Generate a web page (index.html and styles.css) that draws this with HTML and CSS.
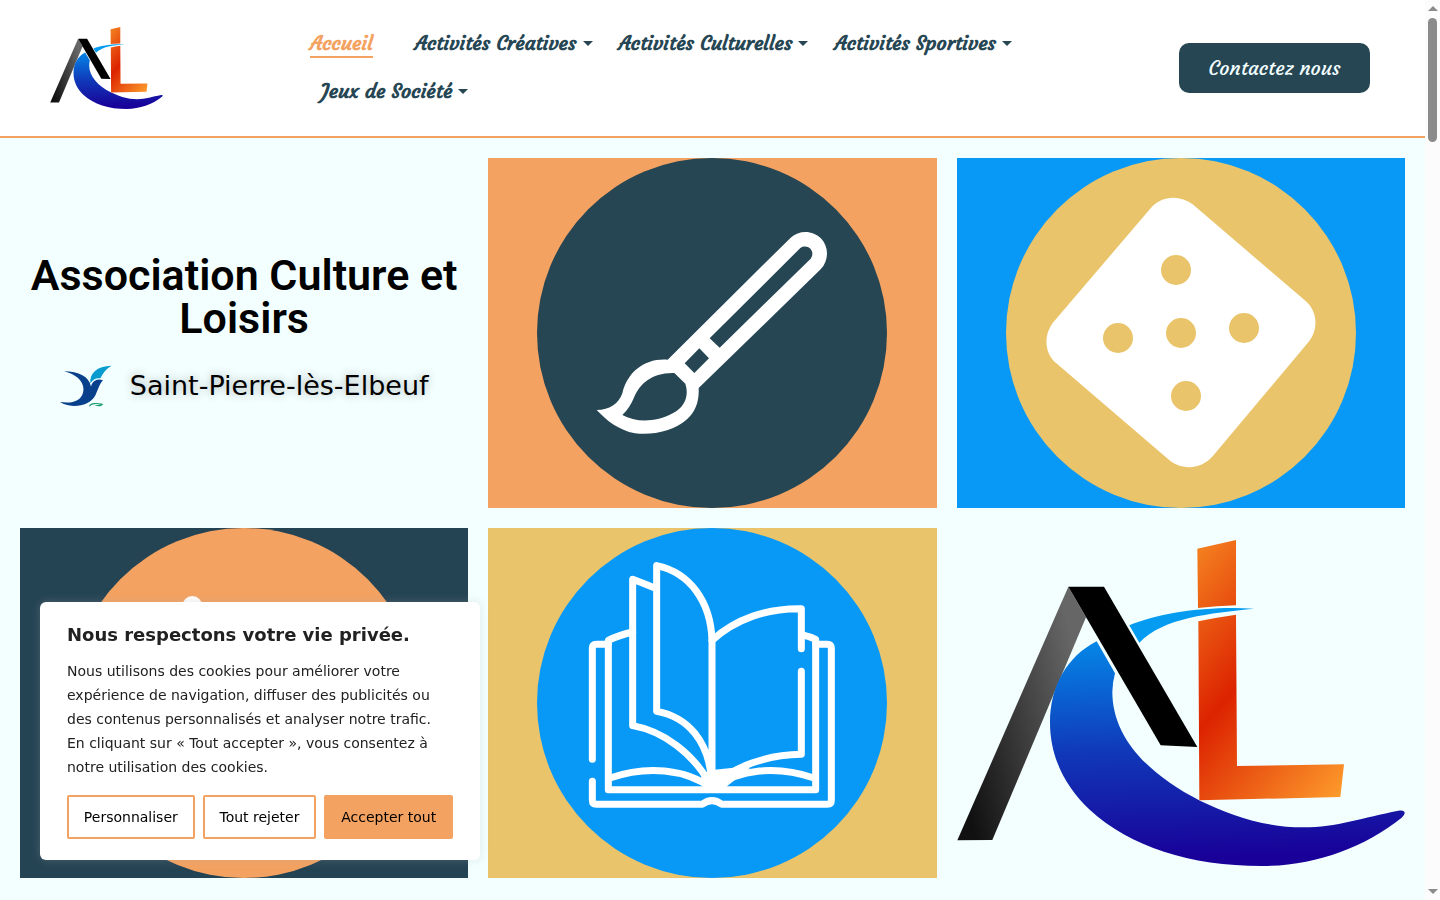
FILE: index.html
```html
<!DOCTYPE html>
<html lang="fr">
<head>
  <meta charset="UTF-8">
  <meta name="viewport" content="width=device-width, initial-scale=1">
  <title>Association Culture et Loisirs</title>
  <link rel="stylesheet" href="styles.css">
</head>
<body>
  <!-- shared logo -->
  <svg class="sprite" aria-hidden="true">
    <defs>
      <linearGradient id="gradLeg" gradientUnits="userSpaceOnUse" x1="60" y1="850" x2="460" y2="760">
        <stop offset="0" stop-color="#111"/>
        <stop offset="1" stop-color="#666"/>
      </linearGradient>
      <linearGradient id="gradC" gradientUnits="userSpaceOnUse" x1="640" y1="334" x2="660" y2="990">
        <stop offset="0" stop-color="#0585e6"/>
        <stop offset="0.5" stop-color="#1038b8"/>
        <stop offset="1" stop-color="#190098"/>
      </linearGradient>
      <linearGradient id="gradL" gradientUnits="userSpaceOnUse" x1="530" y1="289" x2="1150" y2="823">
        <stop offset="0" stop-color="#f58220"/>
        <stop offset="0.45" stop-color="#dc2300"/>
        <stop offset="1" stop-color="#fd9a2b"/>
      </linearGradient>
    </defs>
    <symbol id="logo" viewBox="21 30 1345 978">
      <path fill="url(#gradLeg)" d="M355 170 408 262 127 930 22 931Z"/>
      <path fill="url(#gradC)" d="M440 334C350 380 300 470 300 578C300 680 345 770 420 840C540 950 720 1008 935 1008C1090 1008 1240 955 1355 863C1370 849 1366 838 1345 842C1240 862 1160 892 1060 892C940 892 840 855 750 812C590 730 487 620 487 485Q488 455 495 430Z"/>
      <path d="M355 170H462L742 651 632 646Z"/>
      <path fill="url(#gradL)" d="M742 56 858 30V226Q800 228 744 234ZM745 274Q800 262 858 254L861 708 1182 703 1171 801 748 811Z"/>
      <path fill="#049bf0" d="M538 286C630 248 770 228 912 236C780 250 640 262 568 338Z"/>
    </symbol>
  </svg>

  <header class="header">
    <a href="#" class="logo" aria-label="Accueil du site">
      <svg><use href="#logo"/></svg>
    </a>
    <nav class="nav">
      <a href="#" class="active">Accueil</a>
      <a href="#" class="drop">Activités Créatives</a>
      <a href="#" class="drop">Activités Culturelles</a>
      <a href="#" class="drop">Activités Sportives</a>
      <a href="#" class="drop">Jeux de Société</a>
    </nav>
    <a href="#" class="contact">Contactez nous</a>
  </header>

  <main class="grid">
    <div class="intro">
      <h1>Association Culture et Loisirs</h1>
      <div class="city">
        <svg class="bird" viewBox="180 374 156 124">
          <path fill="#08408b" d="M192 392C236 392 268 408 273 438C277 422 290 412 309 419C298 430 295 446 287 462C273 490 237 500 205 494Q190 491 180 484C212 488 236 484 247 462C260 430 234 402 192 392Z"/>
          <path fill="#0a9bcf" d="M271 428C268 398 290 376 335 375C318 384 309 398 301 413C288 411 279 417 271 428Z"/>
          <path fill="#169b6b" d="M267 498C268 486 282 484 310 490C304 499 293 498 284 494Q297 492 303 492Q278 486 267 498Z"/>
        </svg>
        <span>Saint-Pierre-lès-Elbeuf</span>
      </div>
    </div>

    <a href="#" class="tile orange" aria-label="Activités Créatives">
      <svg viewBox="-69 -156 1050 1050">
        <circle cx="456" cy="369" r="525" fill="#264653"/>
        <path fill="#fff" fill-rule="evenodd" d="M323 449 692 83C718 59 759 60 784 86C807 111 807 152 782 178L416 534C418 573 407 604 381 628C341 665 277 676 225 670C176 661 139 631 110 600C148 600 176 582 187 550C202 485 255 444 323 449ZM449 385 479 413 752 146C768 123 743 99 721 114ZM374 460 403 489 447 445 418 415ZM343 489C275 487 240 522 223 560Q210 593 187 615C225 637 286 639 338 610C374 592 388 557 376 521Z"/>
      </svg>
    </a>

    <a href="#" class="tile blue" aria-label="Jeux de Société">
      <svg viewBox="-72 -66 1050 1050">
        <circle cx="453" cy="459" r="525" fill="#e9c46a"/>
        <path fill="#fff" d="M360 87C393 47 448 43 488 73L827 363C862 393 866 446 838 483L548 829C515 867 461 872 421 843L79 550C43 519 40 467 68 429Z"/>
        <g fill="#e9c46a">
          <circle cx="438" cy="270" r="45"/>
          <circle cx="264" cy="474" r="45"/>
          <circle cx="453" cy="459" r="45"/>
          <circle cx="642" cy="444" r="45"/>
          <circle cx="468" cy="648" r="45"/>
        </g>
      </svg>
    </a>

    <a href="#" class="tile dark" aria-label="Activités Sportives">
      <svg viewBox="147 24 1050 1050">
        <circle cx="672" cy="549" r="525" fill="#f4a261"/>
        <circle cx="517" cy="258" r="30" fill="#fff"/>
      </svg>
    </a>

    <a href="#" class="tile yellow" aria-label="Activités Culturelles">
      <svg viewBox="-99 -36 1050 1050">
        <circle cx="426" cy="489" r="525" fill="#0899f7"/>
        <g fill="none" stroke="#fff" stroke-width="21" stroke-linecap="round" stroke-linejoin="round">
          <path d="M67 658V325Q67 313 79 313H115M67 724V781Q67 793 79 793H397Q426 771 455 793H772Q784 793 784 781V325Q784 313 772 313H737"/>
          <path d="M188 276Q145 286 115 301V749H737V298Q720 290 695 284"/>
          <path d="M249 142Q220 130 188 118V557C280 573 370 640 422 735"/>
          <path d="M426 735V300C422 185 360 98 260 77V514C350 530 420 600 426 735"/>
          <path d="M426 301C495 238 590 204 694 206V326M694 394V643C590 644 490 680 430 738"/>
          <path d="M120 714C230 676 345 686 426 745C510 686 620 676 732 714"/>
        </g>
        <path fill="#fff" d="M392 705 426 690 520 680 540 684 450 755H406Z"/>
      </svg>
    </a>

    <div class="big-logo">
      <svg><use href="#logo"/></svg>
    </div>
  </main>

  <section class="cookies" aria-label="Cookies">
    <h2>Nous respectons votre vie privée.</h2>
    <p>Nous utilisons des cookies pour améliorer votre expérience de navigation, diffuser des publicités ou des contenus personnalisés et analyser notre trafic. En cliquant sur « Tout accepter », vous consentez à notre utilisation des cookies.</p>
    <div class="cookie-buttons">
      <button type="button">Personnaliser</button>
      <button type="button">Tout rejeter</button>
      <button type="button" class="accept">Accepter tout</button>
    </div>
  </section>

  <div class="scrollbar" aria-hidden="true">
    <span class="arrow up"></span>
    <span class="thumb"></span>
    <span class="arrow down"></span>
  </div>
</body>
</html>
```

FILE: styles.css
```css
* {
  box-sizing: border-box;
}
body {
  margin: 0;
  padding-right: 15px;
  min-height: 100vh;
  background-color: #f3ffff;
  color: #000;
  font-family: "DejaVu Sans", sans-serif;
}
a {
  text-decoration: none;
}
svg {
  display: block;
}
.sprite {
  position: absolute;
  width: 0;
  height: 0;
}

/* header */
.header {
  display: flex;
  align-items: center;
  padding: 20px 55px 20px 50px;
  border-bottom: 2px solid #f4a261;
  background-color: #fff;
}
.logo {
  flex: none;
  width: 113px;
  margin-right: 137px;
}
.logo svg {
  width: 100%;
  height: 82px;
}
.nav {
  display: flex;
  flex: 1;
  flex-wrap: wrap;
  max-width: 740px;
}
.nav a {
  display: flex;
  align-items: center;
  height: 48px;
  padding: 0 5px 2px 21px;
  color: #264653;
  font-family: Courgette, Lato, sans-serif;
  font-size: 20px;
  font-weight: 700;
  line-height: 24px;
  white-space: nowrap;
}
.nav .active {
  height: 28px;
  margin: 10px 21px 10px 10px;
  padding: 0;
  border-bottom: 2px solid #f4a261;
  color: #f4a261;
}
.nav .drop::after {
  content: "";
  margin-left: 6px;
  border: 5px solid transparent;
  border-top-color: #264653;
  border-bottom: 0;
}
.contact {
  min-width: 191px;
  margin-left: auto;
  border-radius: 10px;
  background-color: #264653;
  color: #f3ffff;
  font-family: Courgette, Lato, sans-serif;
  font-size: 20px;
  line-height: 50px;
  text-align: center;
}

/* tiles */
.grid {
  display: grid;
  grid-template-columns: repeat(3, 1fr);
  grid-auto-rows: 350px;
  gap: 20px;
  padding: 20px;
}
.intro {
  display: flex;
  flex-direction: column;
  justify-content: center;
  padding-bottom: 4px;
  text-align: center;
}
.intro h1 {
  margin: 0 0 24px;
  font-family: Roboto, sans-serif;
  font-size: 43px;
  font-weight: 600;
  line-height: 43px;
}
.city {
  display: flex;
  align-items: center;
  justify-content: center;
  gap: 18px;
  font-size: 27px;
  line-height: 44px;
  text-shadow: 0 0 10px rgba(0, 0, 0, 0.3);
}
.bird {
  width: 52px;
  height: 42px;
}
.tile {
  display: flex;
  justify-content: center;
}
.tile svg {
  width: 350px;
  height: 350px;
}
.orange {
  background-color: #f4a261;
}
.blue {
  background-color: #0899f7;
}
.dark {
  background-color: #244353;
}
.yellow {
  background-color: #e9c46a;
}
.big-logo {
  display: flex;
  align-items: center;
}
.big-logo svg {
  width: 100%;
  height: 326px;
}

/* cookie banner */
.cookies {
  position: fixed;
  left: 40px;
  bottom: 40px;
  width: 440px;
  padding: 21px 27px;
  border-radius: 6px;
  background-color: #fff;
  color: #212121;
  box-shadow: 0 0 10px rgba(172, 171, 171, 0.3);
}
.cookies h2 {
  margin: 0 0 12px;
  font-size: 18px;
  line-height: 24px;
}
.cookies p {
  margin: 0 0 16px;
  font-size: 14px;
  line-height: 24px;
}
.cookie-buttons {
  display: flex;
  gap: 8px;
}
.cookie-buttons button {
  flex: auto;
  height: 44px;
  padding: 0;
  border: 2px solid #f4a261;
  border-radius: 2px;
  background-color: #fff;
  color: #000;
  font-family: inherit;
  font-size: 14px;
  cursor: pointer;
}
.cookie-buttons .accept {
  background-color: #f4a261;
}

/* scrollbar */
.scrollbar {
  position: fixed;
  top: 0;
  right: 0;
  bottom: 0;
  display: flex;
  flex-direction: column;
  align-items: center;
  width: 15px;
  padding: 6px 0;
  background-color: #fcfcfc;
}
.thumb {
  width: 9px;
  height: 124px;
  margin-top: 7px;
  border-radius: 5px;
  background-color: #8b8b8b;
}
.arrow {
  border: 5px solid transparent;
}
.up {
  border-top: 0;
  border-bottom-color: #8b8b8b;
}
.down {
  margin-top: auto;
  border-bottom: 0;
  border-top-color: #8b8b8b;
}
```
